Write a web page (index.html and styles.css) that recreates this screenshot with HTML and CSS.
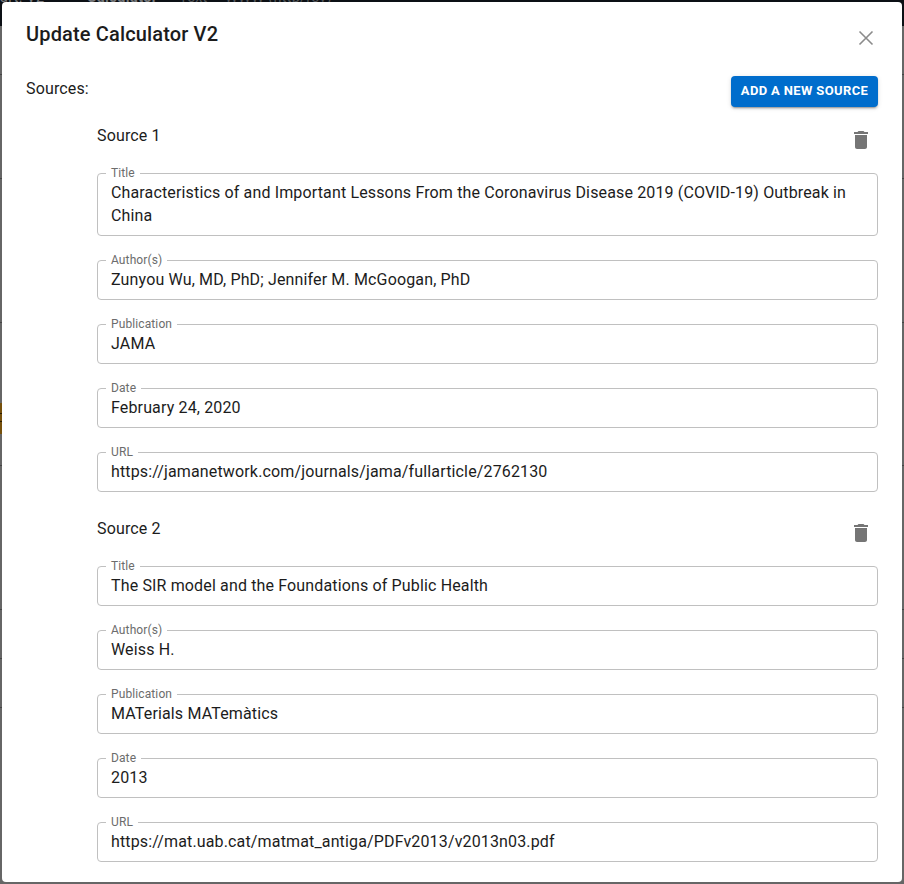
FILE: index.html
```
<!DOCTYPE html>
<html lang="en">
<head>
<meta charset="utf-8">
<title>Update Calculator V2</title>
<link rel="stylesheet" href="styles.css">
</head>
<body>
<div class="backdrop">
  <div class="topbar"><span class="crumb crumb-a">art. V2</span><span class="crumb crumb-b">Calculator</span><span class="crumb crumb-c">Text</span><span class="crumb crumb-d">WWW (http/rev)</span></div>
  <div class="rule r1"></div><div class="rule r2"></div><div class="rule r3"></div><div class="rule r4"></div><div class="rule r5"></div><div class="rule r6"></div><div class="rule r7"></div>
  <div class="marker"></div>
</div>
<main class="dialog">
  <header class="head">
    <h1>Update Calculator V2</h1>
    <svg class="close" viewBox="0 0 16 16"><path d="M1.5 1.5l13 13M14.5 1.5l-13 13"/></svg>
  </header>
  <div class="bar">
    <span>Sources:</span>
    <button class="add">Add a new source</button>
  </div>
  <section class="source">
    <div class="source-head"><span>Source 1</span><svg class="trash" viewBox="0 0 24 24"><path d="M6 19c0 1.1.9 2 2 2h8c1.1 0 2-.9 2-2V7H6v12zM19 4h-3.5l-1-1h-5l-1 1H5v2h14V4z"/></svg></div>
    <div class="field tall"><label>Title</label><p>Characteristics of and Important Lessons From the Coronavirus Disease 2019 (COVID-19) Outbreak in China</p></div>
    <div class="field"><label>Author(s)</label><p>Zunyou Wu, MD, PhD; Jennifer M. McGoogan, PhD</p></div>
    <div class="field"><label>Publication</label><p>JAMA</p></div>
    <div class="field"><label>Date</label><p>February 24, 2020</p></div>
    <div class="field"><label>URL</label><p>https://jamanetwork.com/journals/jama/fullarticle/2762130</p></div>
  </section>
  <section class="source">
    <div class="source-head"><span>Source 2</span><svg class="trash" viewBox="0 0 24 24"><path d="M6 19c0 1.1.9 2 2 2h8c1.1 0 2-.9 2-2V7H6v12zM19 4h-3.5l-1-1h-5l-1 1H5v2h14V4z"/></svg></div>
    <div class="field"><label>Title</label><p>The SIR model and the Foundations of Public Health</p></div>
    <div class="field"><label>Author(s)</label><p>Weiss H.</p></div>
    <div class="field"><label>Publication</label><p>MATerials MATemàtics</p></div>
    <div class="field"><label>Date</label><p>2013</p></div>
    <div class="field"><label>URL</label><p>https://mat.uab.cat/matmat_antiga/PDFv2013/v2013n03.pdf</p></div>
  </section>
</main>
</body>
</html>
```
FILE: styles.css
```
* { box-sizing: border-box; }
body {
  margin: 0;
  height: 884px;
  padding: 2px;
  overflow: hidden;
  font: 400 16px/24px Roboto, sans-serif;
  letter-spacing: 0.146px;
  color: #1c1c1c;
}
h1, p { margin: 0; }
.backdrop { position: absolute; inset: 0; overflow: hidden; background: #666; }
.topbar { position: relative; height: 26px; background: #0c1015; color: #77797c; font-size: 14.5px; line-height: 16px; letter-spacing: 0.25px; }
.crumb { position: absolute; top: -10px; white-space: nowrap; }
.crumb-a { left: 0; }
.crumb-b { left: 87px; font-weight: 700; letter-spacing: 0.4px; }
.crumb-c { left: 179px; color: #505356; }
.crumb-d { left: 225px; color: #505356; }
.rule { position: absolute; left: 0; right: 0; height: 1px; background: #444; }
.r1 { top: 74px; }
.r2 { top: 178px; }
.r3 { top: 322px; }
.r4 { top: 465px; }
.r5 { top: 609px; }
.r6 { top: 658px; }
.r7 { top: 707px; }
.marker { position: absolute; left: 0; top: 403px; width: 2px; height: 31px; background: linear-gradient(#76500c 10px, #2a1c00 10px 11px, #76500c 11px 18px, #2a1c00 18px 19px, #76500c 19px); }
.dialog {
  position: relative;
  height: 880px;
  padding: 20px 24px 0;
  border-radius: 4px;
  background: #fff;
}
.head { display: flex; justify-content: space-between; height: 54px; }
h1 { font-size: 20px; line-height: 24px; font-weight: 500; letter-spacing: 0.15px; }
.close { width: 16px; height: 16px; margin: 8px 4px 0 0; fill: none; stroke: #8b8b8b; stroke-width: 1.6; }
.bar { display: flex; justify-content: space-between; align-items: flex-start; height: 47px; }
.bar > span, .source-head > span { padding-top: 1px; }
.add {
  width: 147px;
  height: 31px;
  padding: 0 0 2px;
  border: 0;
  border-radius: 4px;
  background: #006dcc;
  color: #fff;
  font: 700 13px/22px Roboto, sans-serif;
  letter-spacing: 0.36px;
  text-transform: uppercase;
  white-space: nowrap;
  box-shadow: 0 3px 1px -2px rgba(0,0,0,.2), 0 2px 2px rgba(0,0,0,.14), 0 1px 5px rgba(0,0,0,.12);
}
.source { margin-left: 71px; }
.source-head { display: flex; justify-content: space-between; height: 50px; }
.source + .source { margin-top: 24px; }
.trash { width: 24px; height: 24px; margin: 5px 5px 0 0; fill: #757575; }
.field {
  position: relative;
  height: 40px;
  margin-bottom: 24px;
  padding: 7px 13px;
  border: 1px solid #c0c0c0;
  border-radius: 4px;
}
.tall { height: 63px; }
.field p { line-height: 23px; }
.field label {
  position: absolute;
  left: 8px;
  top: -8px;
  padding: 0 5px;
  background: #fff;
  color: #6c6c6c;
  font-size: 12px;
  line-height: 14px;
  letter-spacing: 0.11px;
}
```
